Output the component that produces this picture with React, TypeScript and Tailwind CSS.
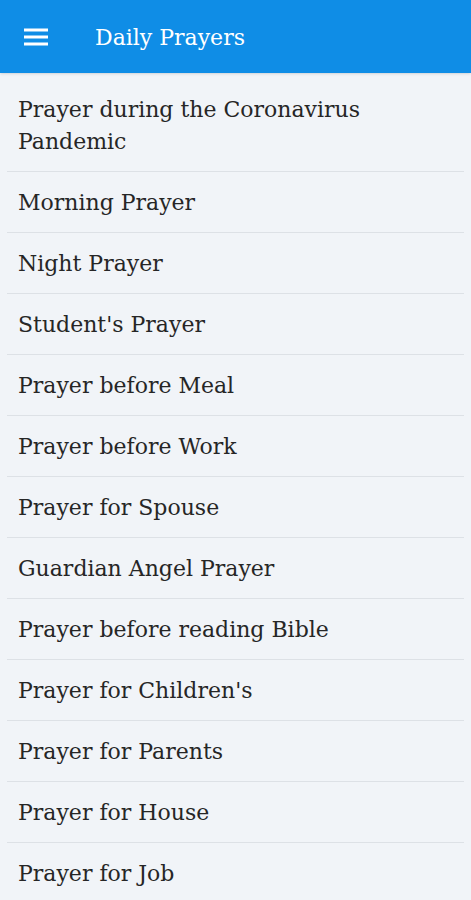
const prayers = [
  "Prayer during the Coronavirus Pandemic",
  "Morning Prayer",
  "Night Prayer",
  "Student's Prayer",
  "Prayer before Meal",
  "Prayer before Work",
  "Prayer for Spouse",
  "Guardian Angel Prayer",
  "Prayer before reading Bible",
  "Prayer for Children's",
  "Prayer for Parents",
  "Prayer for House",
  "Prayer for Job",
];

export default function App() {
  return (
    <div className="h-[900px] overflow-hidden bg-[#f1f4f8] font-['DejaVu_Serif',serif]">
      <header className="h-[73px] bg-[#0f8de6] flex items-center shadow-sm">
        <div className="w-[74px] flex justify-center pr-[2px]">
          <svg width="26" height="20" viewBox="0 0 26 20" className="text-white">
            <rect x="1" y="1.5" width="24" height="3" fill="currentColor" />
            <rect x="1" y="8.5" width="24" height="3" fill="currentColor" />
            <rect x="1" y="15.5" width="24" height="3" fill="currentColor" />
          </svg>
        </div>
        <h1 className="text-white text-[22px] ml-[21px] pt-[2px]">Daily Prayers</h1>
      </header>
      <ul className="px-[7px] pt-[6px]">
        {prayers.map((p) => (
          <li
            key={p}
            className="border-b border-[#dde1e6] px-[11px] pt-[15px] pb-[13px] text-[22px] leading-[32px] text-[#262626]"
          >
            {p}
          </li>
        ))}
      </ul>
    </div>
  );
}
